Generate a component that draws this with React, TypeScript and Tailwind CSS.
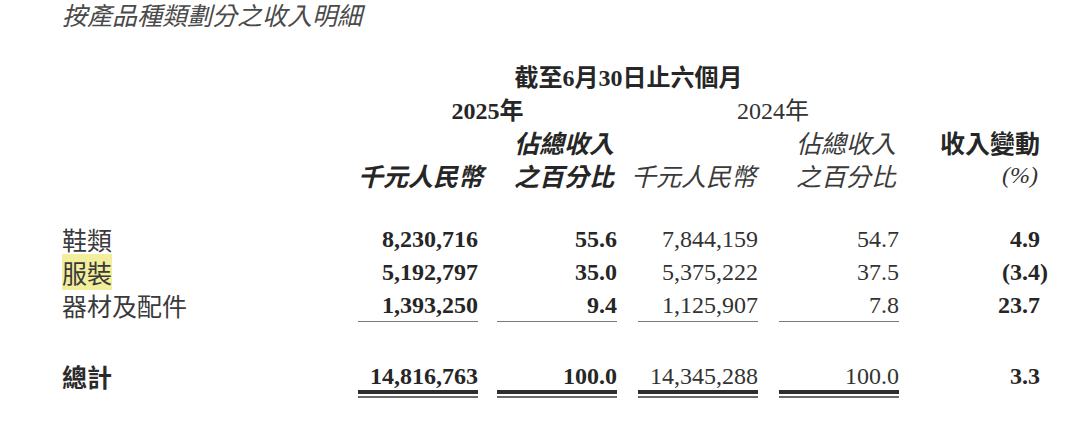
import React from 'react'

const serif = "font-['Liberation_Serif','Noto_Sans_CJK_TC',serif]"
const cjk = "font-['Noto_Sans_CJK_TC','Liberation_Sans',sans-serif]"

type Row = {
  label: string
  highlight?: boolean
  values: [string, string, string, string, string]
}

const rows: Row[] = [
  { label: '鞋類', values: ['8,230,716', '55.6', '7,844,159', '54.7', '4.9'] },
  { label: '服裝', highlight: true, values: ['5,192,797', '35.0', '5,375,222', '37.5', '(3.4)'] },
  { label: '器材及配件', values: ['1,393,250', '9.4', '1,125,907', '7.8', '23.7'] },
]

const total: Row = {
  label: '總計',
  values: ['14,816,763', '100.0', '14,345,288', '100.0', '3.3'],
}

// bold columns: 2025 figures and the change column
const boldCol = [true, true, false, false, true]

function Change({ value }: { value: string }) {
  // negative figures hang their closing bracket past the column edge
  if (value.endsWith(')')) {
    return <span className="-mr-[8px]">{value}</span>
  }
  return <span>{value}</span>
}

function Cell({ value, col, underline }: { value: string; col: number; underline?: boolean }) {
  const weight = boldCol[col] ? 'font-bold text-[#262626]' : 'font-normal text-[#333]'
  if (col === 4) {
    return (
      <div className={`flex justify-end h-[32px] leading-[32px] text-[24px] ${serif} ${weight}`}>
        <Change value={value} />
      </div>
    )
  }
  return (
    <div className="flex justify-end">
      <div
        className={`w-[120px] text-right h-[33px] leading-[32px] text-[24px] ${serif} ${weight} ${
          underline ? 'border-b border-[#7a7a7a]' : ''
        }`}
      >
        {value}
      </div>
    </div>
  )
}

function TotalCell({ value, col }: { value: string; col: number }) {
  const weight = boldCol[col] ? 'font-bold text-[#262626]' : 'font-normal text-[#333]'
  if (col === 4) {
    return (
      <div className={`flex justify-end h-[29px] leading-[32px] text-[24px] ${serif} ${weight}`}>
        <span>{value}</span>
      </div>
    )
  }
  return (
    <div className="flex justify-end">
      <div className="w-[120px] flex flex-col">
        <div className={`text-right h-[30px] leading-[32px] text-[24px] ${serif} ${weight}`}>{value}</div>
        <div className="h-[4px] bg-[#2e2e2e]" />
        <div className="mt-[2px] h-[2px] bg-[#6a6a6a]" />
      </div>
    </div>
  )
}

const caption = 'text-right whitespace-nowrap h-[33px] leading-[33px] text-[25px]'

export default function App() {
  return (
    <div className="w-[1080px] h-[425px] bg-white overflow-hidden">
      <div className={`pl-[62px] h-[28px] leading-[28px] text-[25px] italic text-[#4a4a4a] ${cjk}`}>
        按產品種類劃分之收入明細
      </div>

      <div className="pl-[62px] mt-[34px] grid grid-cols-[296px_120px_139px_141px_141px_141px]">
        {/* period header */}
        <div />
        <div className={`col-span-4 text-center h-[32px] leading-[32px] text-[24px] font-bold text-[#262626] ${serif}`}>
          截至6月30日止六個月
        </div>
        <div />

        {/* years */}
        <div />
        <div className={`col-span-2 text-center h-[32px] leading-[34px] text-[24px] font-bold text-[#262626] ${serif}`}>
          2025年
        </div>
        <div className={`col-span-2 text-center pl-[30px] h-[32px] leading-[34px] text-[24px] text-[#333] ${serif}`}>
          2024年
        </div>
        <div />

        {/* column captions, first line */}
        <div />
        <div />
        <div className={`${caption} pr-[3px] font-bold italic text-[#262626] ${cjk}`}>佔總收入</div>
        <div />
        <div className={`${caption} pr-[3px] italic text-[#3a3a3a] ${cjk}`}>佔總收入</div>
        <div className={`${caption} font-bold text-[#262626] ${cjk}`}>收入變動</div>

        {/* column captions, second line */}
        <div />
        <div className={`${caption} pr-[5px] font-bold italic text-[#262626] ${cjk}`}>千元人民幣</div>
        <div className={`${caption} pr-[3px] font-bold italic text-[#262626] ${cjk}`}>之百分比</div>
        <div className={`${caption} pr-[2px] italic text-[#3a3a3a] ${cjk}`}>千元人民幣</div>
        <div className={`${caption} pr-[3px] italic text-[#3a3a3a] ${cjk}`}>之百分比</div>
        <div className={`text-right h-[33px] leading-[33px] text-[24px] italic text-[#333] pr-[2px] ${serif}`}>
          (%)
        </div>

        <div className="col-span-6 h-[31px]" />

        {rows.map((r, i) => (
          <React.Fragment key={r.label}>
            <div className="h-[32px] leading-[32px] whitespace-nowrap">
              <span className={`text-[25px] text-[#3a3a3a] ${cjk} ${r.highlight ? 'bg-[#f3ee9c]' : ''}`}>
                {r.label}
              </span>
            </div>
            {r.values.map((v, c) => (
              <Cell key={c} value={v} col={c} underline={i === rows.length - 1} />
            ))}
          </React.Fragment>
        ))}

        <div className="col-span-6 h-[38px]" />

        <div className={`h-[29px] leading-[32px] text-[25px] font-bold text-[#2a2a2a] ${cjk}`}>{total.label}</div>
        {total.values.map((v, c) => (
          <TotalCell key={c} value={v} col={c} />
        ))}
      </div>
    </div>
  )
}
